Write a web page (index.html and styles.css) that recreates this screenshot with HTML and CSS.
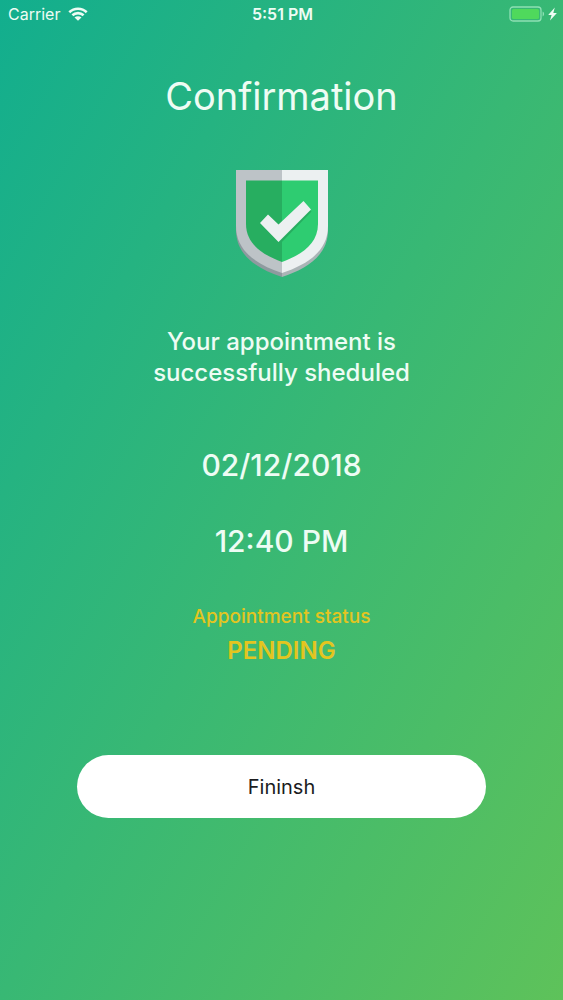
FILE: index.html
```html
<!DOCTYPE html>
<html lang="en">
<head>
<meta charset="utf-8">
<meta name="viewport" content="width=device-width, initial-scale=1">
<title>Confirmation</title>
<link rel="stylesheet" href="styles.css">
</head>
<body>
<div class="screen">
  <header class="status-bar">
    <div class="carrier">
      <span>Carrier</span>
      <svg class="wifi" viewBox="0 0 20 14" aria-hidden="true">
        <g fill="none" stroke="currentColor" stroke-width="2.6">
          <path d="M1.3 5.2C6.2.5 13.8.5 18.7 5.2"/>
          <path d="M4.4 8.3C7.5 5.4 12.5 5.4 15.6 8.3"/>
        </g>
        <path fill="currentColor" d="M6.5 10.4C8.5 8.7 11.5 8.7 13.5 10.4L10 13.8Z"/>
      </svg>
    </div>
    <time class="clock">5:51 PM</time>
    <div class="power">
      <svg class="battery" viewBox="0 0 36 16" aria-hidden="true">
        <rect x="1" y="1" width="31" height="14" rx="3" fill="none" stroke="#8fe0b4" stroke-width="1.3"/>
        <rect x="3" y="3" width="27" height="10" rx="1.5" fill="#4fd95c"/>
        <path d="M33.6 5.6c2 .8 2 4 0 4.8z" fill="#8fe0b4"/>
      </svg>
      <svg class="bolt" viewBox="0 0 9 14" aria-hidden="true"><path fill="currentColor" d="M6.8.5.2 7.9H3.600L2 13.5 8.900 5.900H5.300z"/></svg>
    </div>
  </header>
  <main class="content">
    <h1 class="title">Confirmation</h1>
    <svg class="shield" viewBox="0 0 92 107" role="img" aria-label="Confirmed">
      <path fill="#8e9a9f" d="M0 4H46V107C22 99 0 86 0 60Z"/>
      <path fill="#aab4b6" d="M46 4H92V60C92 86 70 99 46 107Z"/>
      <path fill="#bdc3c7" d="M0 0H46V103C22 95 0 82 0 56Z"/>
      <path fill="#ecf0f1" d="M46 0H92V56C92 82 70 95 46 103Z"/>
      <path fill="#27ae60" d="M10 10.500H46V92C27 85 10 74 10 54Z"/>
      <path fill="#2ecc71" d="M46 10.500H82V54C82 74 65 85 46 92Z"/>
      <path fill="#27ae60" d="M25 56 32 49.500 43.500 60.500 67.500 35.500 75.500 41.500 43.500 74.500Z"/>
      <path fill="#ecf0f1" d="M24 53 32 44.500 42.500 54.500 67.500 31 75 39.500 42.500 72Z"/>
    </svg>
    <p class="message">Your appointment is successfully sheduled</p>
    <p class="when">02/12/2018</p>
    <p class="when">12:40 PM</p>
    <p class="status-label">Appointment status</p>
    <p class="status-value">PENDING</p>
    <button class="finish" type="button">Fininsh</button>
  </main>
</div>
</body>
</html>
```
FILE: styles.css
```css
* { box-sizing: border-box; }

body {
  margin: 0;
  font-family: Inter, "Liberation Sans", sans-serif;
  color: #eefcf4;
}

.screen {
  min-height: 100vh;
  background: linear-gradient(to bottom right, #12ae8e, #5ec25a);
}

.status-bar {
  display: grid;
  grid-template-columns: 1fr auto 1fr;
  align-items: center;
  height: 28px;
  padding: 0 6px 0 8px;
  font-size: 16px;
}

.carrier,
.power {
  display: flex;
  align-items: center;
}

.carrier { gap: 8px; }

.power {
  justify-content: flex-end;
  gap: 3px;
}

.wifi { width: 20px; height: 14px; }
.battery { width: 36px; height: 16px; }
.bolt { width: 9px; height: 14px; }

.clock { font-weight: 600; }

.content {
  display: flex;
  flex-direction: column;
  align-items: center;
  text-align: center;
}

.title {
  margin: 44px 0 0;
  font-size: 38px;
  line-height: 48px;
  font-weight: 400;
}

.shield {
  width: 92px;
  height: 107px;
  margin-top: 50px;
}

.message {
  max-width: 280px;
  margin: 49px 0 57px;
  font-size: 24px;
  line-height: 31px;
  font-weight: 500;
}

.when {
  margin: 0 0 36px;
  font-size: 30px;
  line-height: 40px;
  font-weight: 500;
}

.status-label,
.status-value {
  margin: 0;
  color: #e3c51f;
}

.status-label {
  margin-top: 8px;
  font-size: 19px;
  line-height: 24px;
  font-weight: 500;
}

.status-value {
  margin-top: 6px;
  font-size: 24px;
  line-height: 32px;
  font-weight: 600;
}

.finish {
  width: calc(100% - 154px);
  height: 63px;
  margin: 88px 0 40px;
  border: 0;
  border-radius: 32px;
  background: #fff;
  color: #1c1c1e;
  font: inherit;
  font-size: 20px;
}
```
